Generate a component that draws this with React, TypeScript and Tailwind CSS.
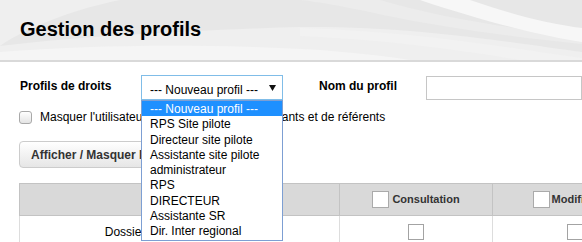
const profils = [
  "--- Nouveau profil ---",
  "RPS Site pilote",
  "Directeur site pilote",
  "Assistante site pilote",
  "administrateur",
  "RPS",
  "DIRECTEUR",
  "Assistante SR",
  "Dir. Inter regional",
];

function HeaderWaves() {
  return (
    <svg
      className="absolute inset-0"
      width="582"
      height="60"
      viewBox="0 0 582 60"
      preserveAspectRatio="none"
    >
      <rect width="582" height="60" fill="#e7e7e7" />
      <path d="M0 0 H120 C80 8 30 25 0 46 Z" fill="#efefef" />
      <path d="M300 0 H380 C440 18 520 30 582 36 V44 C520 38 430 26 370 12 C340 6 320 2 300 0 Z" fill="#ececec" />
      <path d="M420 0 H470 C510 14 550 24 582 28 V42 C540 36 480 20 420 0 Z" fill="#f7f7f7" />
      <path d="M0 46 C80 36 200 30 300 27 C420 26 520 44 582 52 V60 H0 Z" fill="#efefef" />
      <path d="M0 52 C100 44 220 44 320 50 C360 53 390 57 410 60 H0 Z" fill="#f5f5f5" />
      <path d="M300 28 C380 30 460 40 540 52 L582 58 V60 H520 C460 50 390 40 300 36 Z" fill="#f2f2f2" />
    </svg>
  );
}

function Box({ size = 16 }: { size?: number }) {
  return (
    <span
      className={
        size === 17
          ? "inline-block w-[17px] h-[17px] bg-white border border-[#aaaaaa]"
          : "inline-block w-[16px] h-[16px] bg-white border border-[#a3a3a3]"
      }
    />
  );
}

export default function App() {
  return (
    <div className="relative w-[582px] h-[242px] overflow-hidden bg-white text-black font-['Liberation_Sans',Arial,sans-serif]">
      <header className="relative h-[62px] border-b-2 border-[#d9d9d9] overflow-hidden">
        <HeaderWaves />
        <h1 className="relative pl-[20px] pt-[17px] text-[20px] leading-[24px] font-bold">
          Gestion des profils
        </h1>
      </header>

      <div className="pl-[19px]">
        {/* profil + nom */}
        <div className="flex items-start mt-[13px] h-[25px]">
          <label className="w-[122px] pl-[1px] pt-[4px] text-[12px] leading-[14px] font-bold">
            Profils de droits
          </label>
          <div className="flex items-start w-[142px] h-[25px] border border-[#80bde8] bg-white pl-[8px] pt-[7px] text-[12px] leading-[14px]">
            <span>--- Nouveau profil ---</span>
            <svg className="ml-auto mr-[6px] mt-[2px]" width="7" height="6" viewBox="0 0 7 6">
              <polygon points="0,0 7,0 3.5,6" fill="#111" />
            </svg>
          </div>
          <label className="ml-[36px] w-[107px] pt-[4px] text-[12px] leading-[14px] font-bold">
            Nom du profil
          </label>
          <input
            className="mt-[1px] w-[156px] h-[24px] border border-[#c6c6c6] bg-white outline-none"
            type="text"
          />
        </div>

        {/* masquer */}
        <div className="flex items-start mt-[11px] h-[13px]">
          <span className="w-[13px] h-[13px] rounded-[3px] border border-[#a9a9a9] bg-gradient-to-b from-white to-[#e4e4e4]" />
          <span className="ml-[8px] text-[12px] leading-[13px] whitespace-nowrap">
            Masquer l'utilisateur dans la liste des intervenants et de référents
          </span>
        </div>

        <button className="mt-[17px] flex items-center h-[27px] pl-[11px] pr-[12px] rounded-[4px] border border-[#cccccc] bg-gradient-to-b from-white to-[#e6e6e6] text-[12px] leading-[14px] font-bold text-[#333]">
          Afficher / Masquer les colonnes
        </button>

        {/* tableau */}
        <div className="mt-[15px] w-[637px]">
          <div className="grid grid-cols-[320px_153px_164px] h-[33px] bg-[#d9d9d9] border-t border-b border-[#c3c3c3]">
            <div className="border-l border-[#c3c3c3]" />
            <div className="flex items-center justify-center gap-[3px] border-l border-[#c3c3c3] text-[11px] font-bold text-[#333]">
              <Box size={17} />
              <span>Consultation</span>
            </div>
            <div className="flex items-center justify-center gap-[2px] border-l border-[#c3c3c3] text-[11px] font-bold text-[#333]">
              <Box size={17} />
              <span>Modification</span>
            </div>
          </div>
          <div className="grid grid-cols-[320px_153px_164px] h-[32px]">
            <div className="flex items-center justify-center border-l border-[#dddddd] text-[12px] leading-[14px]">
              Dossiers de prise en charge
            </div>
            <div className="flex items-center justify-center border-l border-[#dddddd]">
              <Box />
            </div>
            <div className="flex items-center justify-center border-l border-[#dddddd]">
              <Box />
            </div>
          </div>
        </div>
      </div>

      {/* liste ouverte du select */}
      <ul className="absolute left-[141px] top-[100px] w-[142px] h-[141px] border border-[#7d9fd3] bg-white z-10 text-[12px]">
        {profils.map((p, i) => (
          <li
            key={p}
            className={
              i === 0
                ? "h-[15.25px] pl-[8px] pt-[1px] leading-[14.25px] bg-[#1e90ff] text-white"
                : "h-[15.25px] pl-[8px] pt-[1px] leading-[14.25px]"
            }
          >
            {p}
          </li>
        ))}
      </ul>
    </div>
  );
}
